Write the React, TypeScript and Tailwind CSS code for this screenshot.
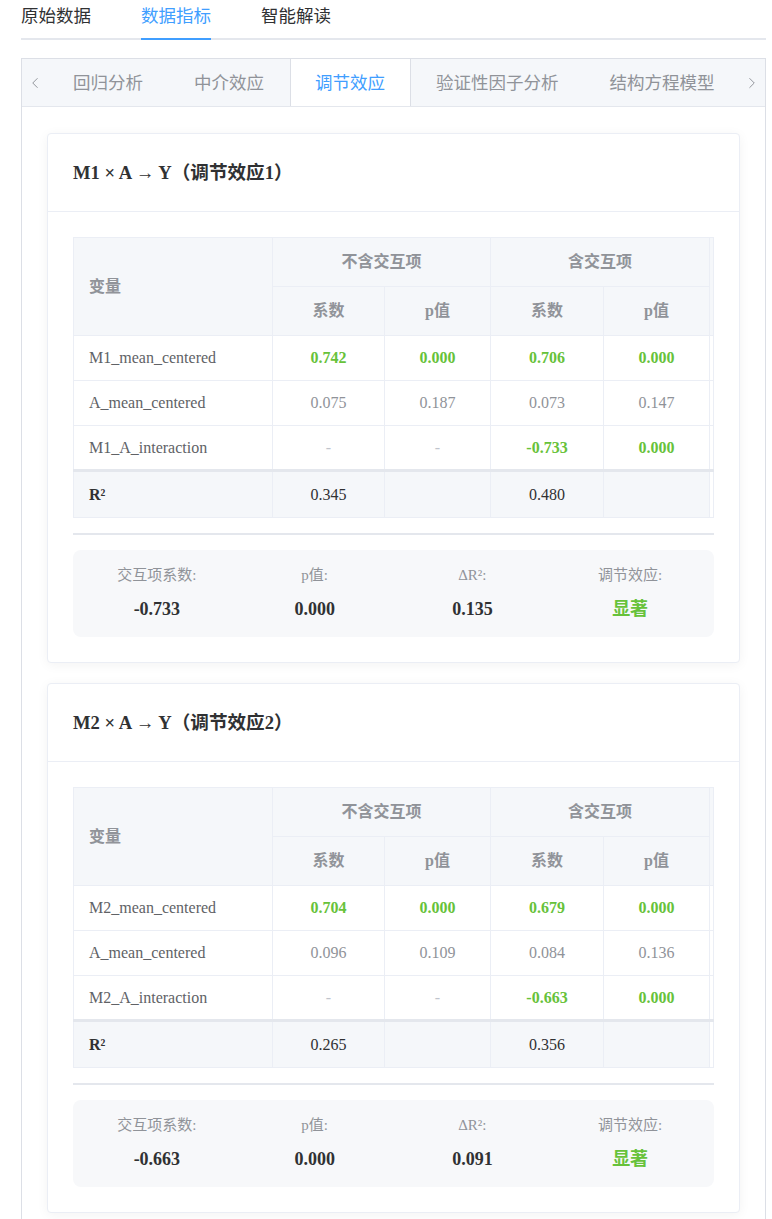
import React from "react";
import { ChevronLeft, ChevronRight } from "lucide-react";

type Cell = { v: string; t: "g" | "n" | "d" | "b" };
type Row = { name: string; cells: Cell[] };
type CardData = {
  title: string;
  rows: Row[];
  r2: [string, string];
  summary: [string, string, string, string];
};

const g = (v: string): Cell => ({ v, t: "g" });
const n = (v: string): Cell => ({ v, t: "n" });
const d: Cell = { v: "-", t: "d" };

const cards: CardData[] = [
  {
    title: "M1 × A → Y（调节效应1）",
    rows: [
      { name: "M1_mean_centered", cells: [g("0.742"), g("0.000"), g("0.706"), g("0.000")] },
      { name: "A_mean_centered", cells: [n("0.075"), n("0.187"), n("0.073"), n("0.147")] },
      { name: "M1_A_interaction", cells: [d, d, g("-0.733"), g("0.000")] },
    ],
    r2: ["0.345", "0.480"],
    summary: ["-0.733", "0.000", "0.135", "显著"],
  },
  {
    title: "M2 × A → Y（调节效应2）",
    rows: [
      { name: "M2_mean_centered", cells: [g("0.704"), g("0.000"), g("0.679"), g("0.000")] },
      { name: "A_mean_centered", cells: [n("0.096"), n("0.109"), n("0.084"), n("0.136")] },
      { name: "M2_A_interaction", cells: [d, d, g("-0.663"), g("0.000")] },
    ],
    r2: ["0.265", "0.356"],
    summary: ["-0.663", "0.000", "0.091", "显著"],
  },
];

function cellClass(t: Cell["t"]) {
  if (t === "g") return "text-[#67c23a] font-bold";
  if (t === "d") return "text-[#c0c4cc]";
  return "text-[#909399]";
}

function ResultCard({ data }: { data: CardData }) {
  const th = "border border-[#ebeef5] bg-[#f5f7fa] text-[16px] font-bold text-[#909399] text-center p-0";
  const ft = "border border-[#ebeef5] border-t-[3px] border-t-[#e4e7ed]";
  return (
    <div className="mb-5 rounded-[4px] border border-[#ebeef5] bg-white shadow-[0_2px_12px_0_rgba(0,0,0,0.05)]">
      <div className="flex h-[78px] items-center border-b border-[#ebeef5] px-[25px]">
        <h3 className="text-[18.6px] font-bold text-[#303133] leading-[24px]">{data.title}</h3>
      </div>
      <div className="p-[25px]">
        <table className="w-full table-fixed border-collapse">
          <colgroup>
            <col className="w-[199px]" />
            <col className="w-[112px]" />
            <col className="w-[106px]" />
            <col className="w-[113px]" />
            <col className="w-[106px]" />
            <col className="w-[4px]" />
          </colgroup>
          <thead>
            <tr className="h-[49px]">
              <th rowSpan={2} className={th + " !text-left pl-[15px]"}>变量</th>
              <th colSpan={2} className={th}>不含交互项</th>
              <th colSpan={2} className={th}>含交互项</th>
              <th rowSpan={2} className="border border-[#ebeef5] bg-[#f5f7fa] p-0"></th>
            </tr>
            <tr className="h-[49px]">
              <th className={th}>系数</th>
              <th className={th}>p值</th>
              <th className={th}>系数</th>
              <th className={th}>p值</th>
            </tr>
          </thead>
          <tbody>
            {data.rows.map((r) => (
              <tr key={r.name} className="h-[45px]">
                <td className="border border-[#ebeef5] pl-[15px] text-[16px] text-[#606266]">{r.name}</td>
                {r.cells.map((c, i) => (
                  <td key={i} className={"border border-[#ebeef5] text-center text-[16px] " + cellClass(c.t)}>
                    {c.v}
                  </td>
                ))}
                <td className="border border-[#ebeef5] p-0"></td>
              </tr>
            ))}
            <tr className="h-[47px]">
              <td className={ft + " bg-[#f5f7fa] pl-[15px] text-[16px] font-bold text-[#303133]"}>R²</td>
              <td className={ft + " bg-[#f5f7fa] text-center text-[16px] text-[#303133]"}>{data.r2[0]}</td>
              <td className={ft + " bg-[#f5f7fa]"}></td>
              <td className={ft + " bg-[#f5f7fa] text-center text-[16px] text-[#303133]"}>{data.r2[1]}</td>
              <td className={ft + " bg-[#f5f7fa]"}></td>
              <td className={ft + " bg-white p-0"}></td>
            </tr>
          </tbody>
        </table>
        <div className="mt-[15px] border-t-2 border-[#e4e7ed] pt-[15px]">
          <div className="grid grid-cols-4 rounded-[8px] bg-[#f7f8fa] px-[5px] pt-[14px] pb-[15px] text-center">
            {[
              ["交互项系数:", data.summary[0]],
              ["p值:", data.summary[1]],
              ["ΔR²:", data.summary[2]],
              ["调节效应:", data.summary[3]],
            ].map(([label, val], i) => (
              <div key={i} className="flex flex-col items-center">
                <div className="text-[15px] leading-[22px] text-[#909399]">{label}</div>
                <div
                  className={
                    "mt-[10px] text-[18px] font-bold leading-[26px] " +
                    (i === 3 ? "text-[#67c23a]" : "text-[#303133]")
                  }
                >
                  {val}
                </div>
              </div>
            ))}
          </div>
        </div>
      </div>
    </div>
  );
}

export default function App() {
  const topTabs = ["原始数据", "数据指标", "智能解读"];
  const subTabs = ["回归分析", "中介效应", "调节效应", "验证性因子分析", "结构方程模型"];
  return (
    <div
      className="bg-white pl-[21px] pr-[6px]"
      style={{ fontFamily: '"Liberation Serif", "Noto Sans CJK SC", serif' }}
    >
      <div className="flex gap-[50px] border-b-2 border-[#e4e7ed]" style={{ fontFamily: '"Noto Sans CJK SC", sans-serif' }}>
        {topTabs.map((t, i) => (
          <div
            key={t}
            className={
              "-mb-[2px] h-[40px] border-b-2 pt-[4px] text-[17.5px] leading-[22px] " +
              (i === 1 ? "border-[#409eff] text-[#409eff]" : "border-transparent text-[#303133]")
            }
          >
            {t}
          </div>
        ))}
      </div>

      <div className="mt-[18px] border border-[#dcdfe6] bg-white">
        <div
          className="flex h-[48px] border-b border-[#e4e7ed] bg-[#f5f7fa]"
          style={{ fontFamily: '"Noto Sans CJK SC", sans-serif' }}
        >
          <div className="flex w-[25.5px] shrink-0 items-center justify-center text-[#909399]">
            <ChevronLeft size={18} strokeWidth={1.3} />
          </div>
          <div className="flex flex-1 overflow-hidden">
            {subTabs.map((t, i) => (
              <div
                key={t}
                className={
                  "flex h-[48px] shrink-0 items-center border-x px-[24.5px] pb-[3px] text-[17.5px] leading-[22px] " +
                  (i === 2
                    ? "border-[#dcdfe6] bg-white text-[#409eff]"
                    : "border-transparent text-[#909399]")
                }
              >
                {t}
              </div>
            ))}
          </div>
          <div className="flex w-[26px] shrink-0 items-center justify-center text-[#909399]">
            <ChevronRight size={18} strokeWidth={1.3} />
          </div>
        </div>
        <div className="px-[25px] pt-[26px] pb-[25px]">
          {cards.map((c) => (
            <ResultCard key={c.title} data={c} />
          ))}
        </div>
      </div>
    </div>
  );
}
